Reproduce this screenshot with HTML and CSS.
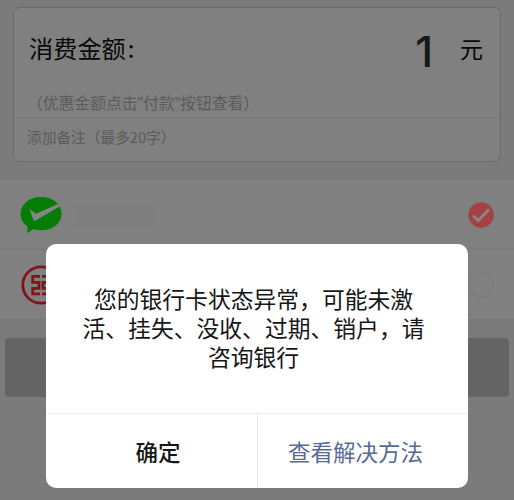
FILE: index.html
```html
<!DOCTYPE html>
<html lang="zh-CN">
<head>
<meta charset="utf-8">
<title>付款</title>
<link rel="stylesheet" href="styles.css">
</head>
<body>
<main class="page">
  <section class="card">
    <div class="amount">
      <span class="label">消费金额<span class="colon">:</span></span>
      <span class="value">1</span>
      <span class="unit">元</span>
    </div>
    <p class="hint">（优惠金额点击"付款"按钮查看）</p>
    <p class="remark">添加备注（最多20字）</p>
  </section>
  <section class="methods">
    <div class="method">
      <svg class="wechat" viewBox="0 0 42 38"><path fill="#057c08" d="M21 1C9 1 .5 8.500 .5 18c0 5 2.500 9.500 7 12.500L7.200 37l6.500-4c2.300.8 4.800 1.200 7.300 1.200 12 0 20.500-7 20.500-16.500S33 1 21 1z"/><path fill="#858585" d="M9.500 13l6.500 4.800L38 8l2 2.300L16 24.300c-1.200.6-2.200.3-2.700-.9z"/></svg>
      <span class="blank"></span>
      <svg class="radio" viewBox="0 0 26 26"><circle cx="13" cy="13" r="12.700" fill="#a34144"/><path d="M5 13.500l5.300 5L21 7.500" fill="none" stroke="#8c8482" stroke-width="3"/></svg>
    </div>
    <div class="method">
      <svg class="bank" viewBox="0 0 40 40"><circle cx="20" cy="20" r="18.200" fill="none" stroke="#84121a" stroke-width="2.800"/><path d="M19 11.300h-7.300v6H18v6h-6.300v5.500H19M21 11.300h7.300v6H22v6h6.300v5.500H21" fill="none" stroke="#84121a" stroke-width="2.800"/></svg>
      <svg class="radio" viewBox="0 0 26 26"><circle cx="13" cy="13" r="12.400" fill="none" stroke="#797979"/></svg>
    </div>
  </section>
  <div class="pay"></div>
</main>
<div class="dialog" role="dialog">
  <p class="message">您的银行卡状态异常，可能未激<br>活、挂失、没收、过期、销户，请<br>咨询银行</p>
  <div class="actions">
    <button class="action">确定</button>
    <button class="action link">查看解决方法</button>
  </div>
</div>
</body>
</html>
```
FILE: styles.css
```css
* { box-sizing: border-box; }
body { margin: 0; width: 514px; height: 500px; overflow: hidden; background: #7b7b7b; font-family: "Noto Sans CJK SC", sans-serif; position: relative; }
p { margin: 0; }
svg { display: block; }
.page { padding-top: 7px; }
.card { margin: 0 13px; height: 155px; border: 1px solid #6a6a6a; border-radius: 7px; background: #808080; }
.amount { display: flex; height: 80px; align-items: center; padding: 0 17px 0 15px; color: #080808; font-size: 24.2px; }
.label { flex: 1; padding-bottom: 1px; }
.colon { margin-left: 2px; }
.value { font: 500 43px/1 Inter, "Liberation Sans", sans-serif; color: #181818; margin-right: 27px; padding-top: 6px; }
.unit { font-size: 23px; }
.hint { height: 30px; line-height: 31px; font-family: "Liberation Sans", "Noto Sans CJK SC", sans-serif; font-size: 15.9px; letter-spacing: -.1px; padding-left: 13px; color: #5b5b5b; border-bottom: 1px solid #797979; }
.remark { line-height: 38px; font-size: 14.7px; padding-left: 13px; color: #5b5b5b; }
.methods { margin-top: 18px; background: #808080; }
.method { height: 70px; display: flex; align-items: center; padding: 0 20px; border-bottom: 1px solid #767676; }
.wechat { width: 42px; height: 38px; }
.blank { width: 80px; height: 24px; margin-left: 12px; background: #7f7f7f; }
.bank { width: 40px; height: 40px; margin-left: 1px; }
.radio { width: 26px; height: 26px; margin-left: auto; }
.pay { margin: 18px 5px 0; height: 59px; border-radius: 4px; background: #646464; }
.dialog { position: absolute; left: 46px; top: 244px; width: 422px; height: 244px; border-radius: 10px; background: #fff; display: flex; flex-direction: column; }
.message { height: 169px; padding: 40px 7px 0 0; text-align: center; font-size: 22.8px; line-height: 29px; color: #161616; }
.actions { flex: 1; display: grid; grid-template-columns: 1fr 1fr; border-top: 1px solid #ececec; }
.action { margin: 0; padding: 0 0 1px 13px; border: 0; background: none; font: 500 22.500px "Noto Sans CJK SC", sans-serif; color: #161616; }
.link { padding: 0 15px 1px 0; border-left: 1px solid #e6e6e6; font-weight: 400; color: #576b95; }
```
